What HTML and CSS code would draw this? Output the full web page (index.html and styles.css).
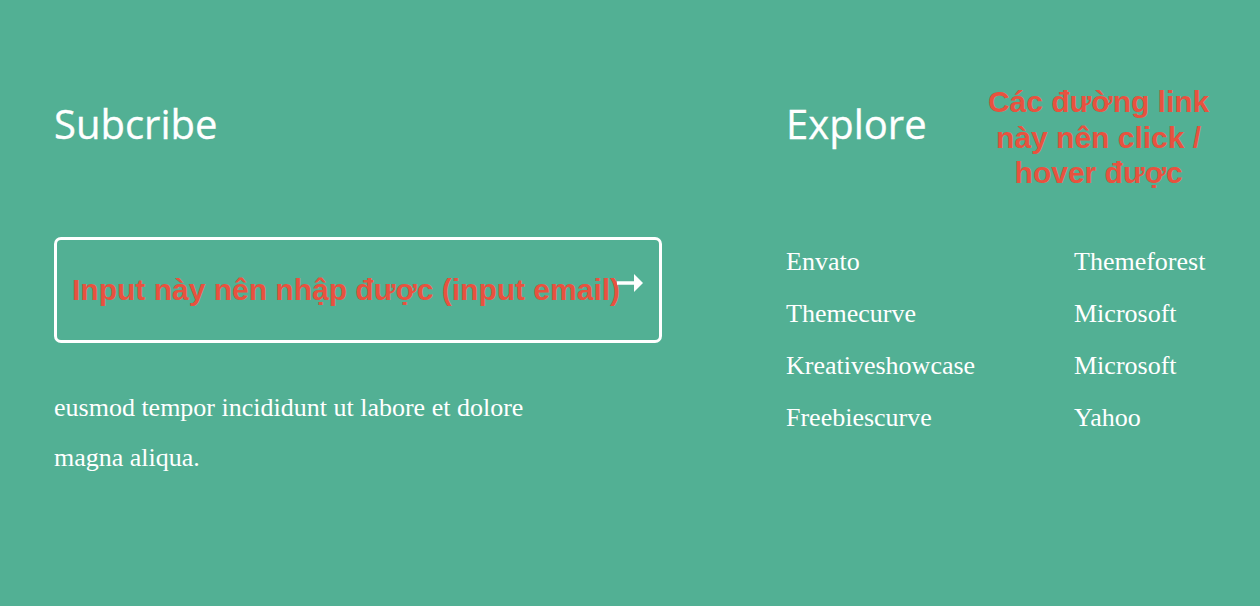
FILE: index.html
```html
<!DOCTYPE html>
<html>
<head>
<meta charset="utf-8">
<link rel="stylesheet" href="styles.css">
</head>
<body>
<footer class="footer">
  <section class="subscribe">
    <h2 class="title">Subcribe</h2>
    <form class="sub-form">
      <input class="sub-input" type="email" placeholder="Input này nên nhập được (input email)">
      <button class="sub-btn" type="submit" aria-label="Submit">
        <svg width="26" height="20" viewBox="0 0 26 20"><path d="M0 9H19" stroke="#fff" stroke-width="3.5"/><path d="M17 0L26 9L17 18Z" fill="#fff"/></svg>
      </button>
    </form>
    <p class="desc">eusmod tempor incididunt ut labore et dolore magna aliqua.</p>
  </section>
  <section class="explore">
    <div class="explore-head">
      <h2 class="title">Explore</h2>
      <p class="note">Các đường link này nên click / hover được</p>
    </div>
    <ul class="links">
      <li><a href="#">Envato</a></li>
      <li><a href="#">Themeforest</a></li>
      <li><a href="#">Themecurve</a></li>
      <li><a href="#">Microsoft</a></li>
      <li><a href="#">Kreativeshowcase</a></li>
      <li><a href="#">Microsoft</a></li>
      <li><a href="#">Freebiescurve</a></li>
      <li><a href="#">Yahoo</a></li>
    </ul>
  </section>
</footer>
</body>
</html>
```
FILE: styles.css
```css
* { box-sizing: border-box; }
html, body { margin: 0; padding: 0; }
body {
  background: #52b094;
  width: 1260px;
  height: 606px;
  overflow: hidden;
  font-family: "Liberation Serif", serif;
  color: #fff;
}
.footer {
  display: flex;
  padding: 96px 0 0 54px;
}
.subscribe {
  width: 608px;
}
.title {
  font-family: "Open Sans", sans-serif;
  font-weight: 400;
  font-size: 40px;
  line-height: 56px;
  margin: 0;
  -webkit-text-stroke: 0.3px #fff;
}
.sub-form {
  position: relative;
  margin-top: 85px;
  height: 106px;
  border: 3px solid #fff;
  border-radius: 7px;
  display: flex;
  align-items: center;
}
.sub-input {
  flex: 1;
  height: 100%;
  background: transparent;
  border: 0;
  outline: none;
  padding: 0 0 0 15px;
  font-family: "Liberation Sans", Arial, sans-serif;
  font-weight: 700;
  font-size: 30px;
  color: #fff;
}
.sub-input::placeholder {
  color: #e8523f;
  opacity: 1;
}
.sub-btn {
  position: absolute;
  right: 16px;
  top: 34px;
  background: none;
  border: 0;
  padding: 0;
  cursor: pointer;
  line-height: 0;
}
.desc {
  width: 500px;
  margin: 40px 0 0;
  font-size: 26px;
  line-height: 50px;
}
.explore {
  margin-left: 124px;
  width: 440px;
}
.explore-head {
  display: flex;
  align-items: flex-start;
}
.note {
  margin: -12px 0 0 47px;
  width: 250px;
  text-align: center;
  font-family: "Liberation Sans", Arial, sans-serif;
  font-weight: 700;
  font-size: 30px;
  line-height: 35.5px;
  color: #e8523f;
}
.links {
  list-style: none;
  margin: 45px 0 0;
  padding: 0;
  display: grid;
  grid-template-columns: 288px 1fr;
}
.links li {
  font-size: 26px;
  line-height: 52px;
}
.links a {
  color: #fff;
  text-decoration: none;
}
.links a:hover {
  text-decoration: underline;
}
```
